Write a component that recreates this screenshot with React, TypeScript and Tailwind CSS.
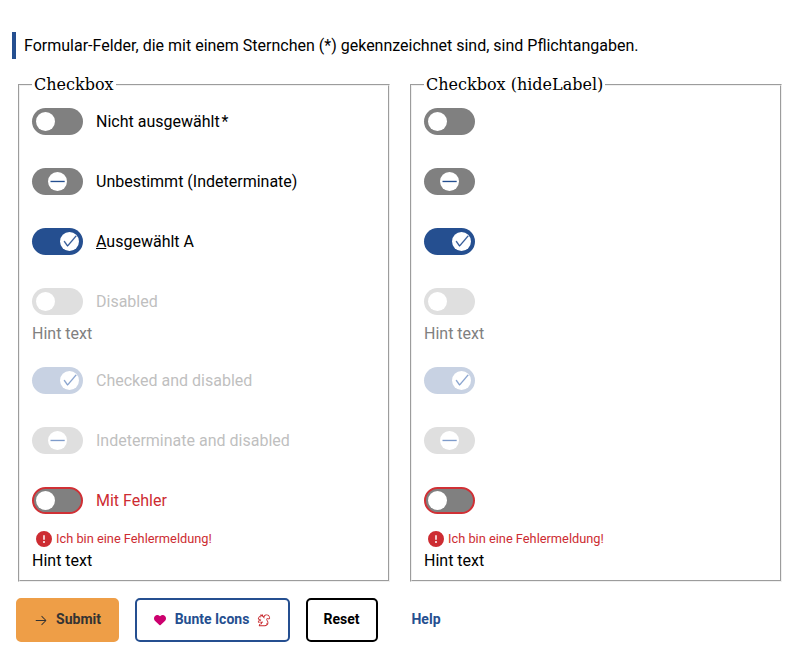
import React from 'react';
import { VscArrowRight, VscCheck, VscSquirrel } from 'react-icons/vsc';
import { FaCircleExclamation, FaHeart } from 'react-icons/fa6';

type State = 'off' | 'mixed' | 'on';

interface Item {
  label: React.ReactNode;
  name: string;
  state: State;
  disabled?: boolean;
  error?: string;
  hint?: string;
}

const items: Item[] = [
  { name: 'plain', label: <>Nicht ausgewählt<span className="ml-0.5">*</span></>, state: 'off' },
  { name: 'mixed', label: 'Unbestimmt (Indeterminate)', state: 'mixed' },
  { name: 'checked', label: <><u className="underline">A</u>usgewählt A</>, state: 'on' },
  { name: 'disabled', label: 'Disabled', state: 'off', disabled: true, hint: 'Hint text' },
  { name: 'checked-disabled', label: 'Checked and disabled', state: 'on', disabled: true },
  { name: 'mixed-disabled', label: 'Indeterminate and disabled', state: 'mixed', disabled: true },
  { name: 'error', label: 'Mit Fehler', state: 'off', error: 'Ich bin eine Fehlermeldung!', hint: 'Hint text' },
];

const justify: Record<State, string> = {
  off: 'justify-start',
  mixed: 'justify-center',
  on: 'justify-end',
};

function Toggle({ item }: { item: Item }) {
  const on = item.state === 'on';
  const track = item.disabled
    ? on ? 'bg-[#c8d2e3]' : 'bg-[#dfdfdf]'
    : on ? 'bg-[#254f90]' : 'bg-[#808080]';
  return (
    <span
      className={`flex h-[27px] w-[51px] shrink-0 items-center rounded-full ${justify[item.state]} ${track} ${
        item.error ? 'border-2 border-[#d03035] px-0.5' : 'px-1'
      }`}
    >
      <span
        className={`flex size-[19px] items-center justify-center rounded-full bg-white ${
          item.disabled ? 'text-[#7f9ccb]' : 'text-[#254f90]'
        }`}
      >
        {on && <VscCheck size={16} strokeWidth={0.35} />}
        {item.state === 'mixed' && (
          <svg viewBox="0 0 19 19" className="size-[19px]" fill="currentColor">
            <rect x="2.5" y="8.8" width="14.2" height="1.35" />
          </svg>
        )}
      </span>
    </span>
  );
}

function Field({ item, hideLabel }: { item: Item; hideLabel: boolean }) {
  const color = item.error ? 'text-[#cd2c32]' : item.disabled ? 'text-[#bfbfbf]' : 'text-black';
  return (
    <div>
      <div className="flex h-11 items-center gap-[13px]">
        <Toggle item={item} />
        {!hideLabel && <span className={color}>{item.label}</span>}
      </div>
      {item.error && (
        <div className="mt-[7px] flex h-[19px] items-center gap-1 pl-1 text-[12.8px] leading-[19px] text-[#cd2c32]">
          <FaCircleExclamation size={16} />
          {item.error}
        </div>
      )}
      {item.hint && (
        <div className={`h-[19px] ${item.error ? 'mt-[3px] leading-[19px]' : 'leading-[21px] text-[#808080]'}`}>
          {item.hint}
        </div>
      )}
    </div>
  );
}

function Group({ title, hideLabel = false }: { title: string; hideLabel?: boolean }) {
  return (
    <fieldset className="h-[507px] w-[372px] border-2 border-[#f0f0f0] px-3 [border-style:groove]">
      <legend className="px-0.5 font-['DejaVu_Serif',serif] leading-[19px]">{title}</legend>
      <div className="mt-[5px] flex flex-col gap-4">
        {items.map((item) => (
          <Field key={item.name} item={item} hideLabel={hideLabel} />
        ))}
      </div>
    </fieldset>
  );
}

const button = 'flex h-11 items-center justify-center rounded-[5px] border-2 pb-[3px] text-sm font-bold';

export default function App() {
  return (
    <main className="min-h-[658px] bg-white pt-8 font-[Roboto,sans-serif] text-base leading-[19px] text-black">
      <p className="ml-3 flex h-[27px] items-center border-l-4 border-[#254f90] pl-2">
        Formular-Felder, die mit einem Sternchen (*) gekennzeichnet sind, sind Pflichtangaben.
      </p>
      <div className="mt-4 flex gap-5 pl-[18px]">
        <Group title="Checkbox" />
        <Group title="Checkbox (hideLabel)" hideLabel />
      </div>
      <div className="mt-4 flex gap-4 pl-4">
        <button className={`${button} w-[103px] gap-2 border-[#ee9e47] bg-[#ee9e47] text-[#333]`}>
          <VscArrowRight size={14} className="mt-0.5" />
          Submit
        </button>
        <button className={`${button} w-[155px] gap-2 border-[#254f90] text-[#254f90]`}>
          <FaHeart size={12} className="mt-0.5 mr-px text-[#cc006e]" />
          Bunte Icons
          <VscSquirrel size={14} className="mt-0.5 text-[#c8282d]" />
        </button>
        <button className={`${button} w-[72px] border-black pr-px`}>Reset</button>
        <button className={`${button} w-[64px] border-transparent text-[#254f90]`}>Help</button>
      </div>
    </main>
  );
}
